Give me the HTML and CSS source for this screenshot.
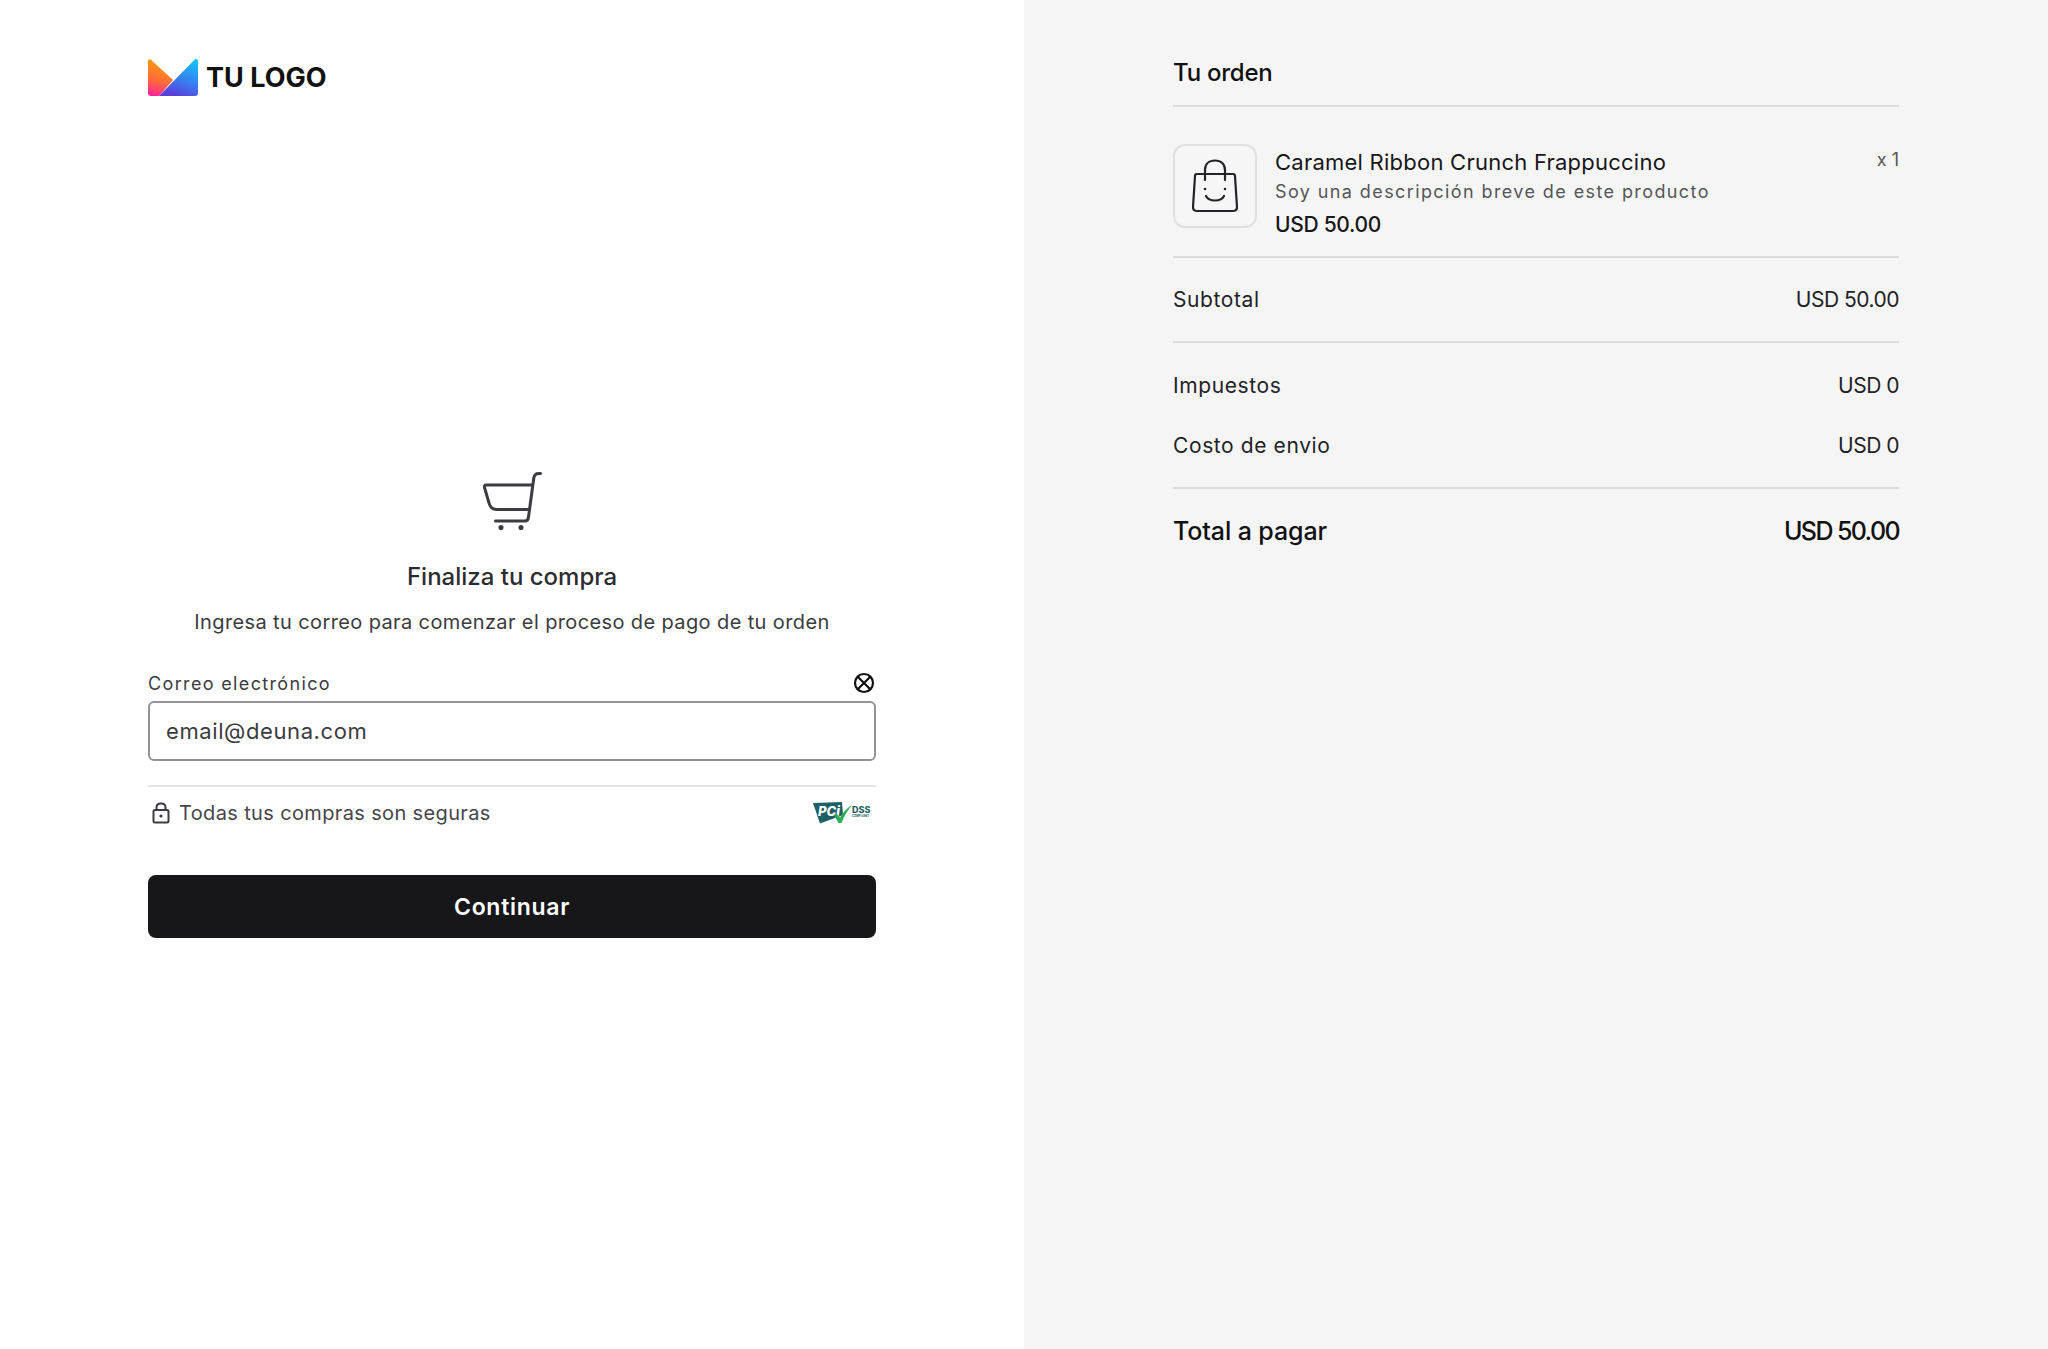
FILE: index.html
```html
<!DOCTYPE html>
<html lang="es">
<head>
<meta charset="utf-8">
<title>Checkout</title>
<link rel="stylesheet" href="styles.css">
</head>
<body>
<main class="page">
  <section class="left">
    <header class="brand">
      <svg class="brand-mark" viewBox="0 0 50 38" width="50" height="38">
        <defs>
          <linearGradient id="gl" x1="0.3" y1="0" x2="0.1" y2="1">
            <stop offset="0" stop-color="#ff9d0a"/><stop offset="0.55" stop-color="#ff6a3a"/><stop offset="1" stop-color="#ff1f9c"/>
          </linearGradient>
          <linearGradient id="gr" x1="0.85" y1="0" x2="0.45" y2="1">
            <stop offset="0" stop-color="#12c4fb"/><stop offset="0.6" stop-color="#3a7bf0"/><stop offset="1" stop-color="#5a3fd8"/>
          </linearGradient>
        </defs>
        <path d="M0 3.500C0 1.500 1.800 .8 3 1.800L25 22 11 38H3C1 38 0 37 0 35Z" fill="url(#gl)"/>
        <path d="M47 1.200C48.800 .4 50 1.500 50 3.500V35C50 37 49 38 47 38H11Z" fill="url(#gr)"/>
      </svg>
      <span class="brand-name">TU LOGO</span>
    </header>
    <div class="form">
      <svg class="cart" viewBox="0 0 60 60" width="60" height="60" fill="none" stroke="#3b3b40" stroke-width="3" stroke-linecap="round" stroke-linejoin="round">
        <path d="M58.500 2.500H57C54 2.500 52.300 4 51.800 7L46.500 46C46.200 48.500 45 50 43 50H13.500"/>
        <path d="M50 14H4C2.800 14 2.200 15 2.500 16.500L7 32C8 36 11 38.500 15 38.500H47.500"/>
        <circle cx="19" cy="56.500" r="1.800" fill="#3b3b40" stroke-width="1.500"/>
        <circle cx="39" cy="56.500" r="1.800" fill="#3b3b40" stroke-width="1.500"/>
      </svg>
      <h1 class="form-title">Finaliza tu compra</h1>
      <p class="form-desc">Ingresa tu correo para comenzar el proceso de pago de tu orden</p>
      <div class="label-row">
        <label class="field-label" for="email">Correo electrónico</label>
        <svg class="clear" viewBox="0 0 22 22" width="22" height="22" fill="none" stroke="#111" stroke-width="2.200">
          <circle cx="11" cy="11" r="9"/><path d="M5 5L17 17M17 5L5 17"/>
        </svg>
      </div>
      <input class="field" id="email" type="text" placeholder="email@deuna.com">
      <div class="secure">
        <span class="secure-text">
          <svg class="lock" viewBox="0 0 18 22" width="18" height="22" fill="none" stroke="#3b3b40" stroke-width="2">
            <rect x="1.500" y="8" width="15" height="12.500" rx="1.500"/>
            <path d="M4.500 8V5.500C4.500 3 6.500 1.500 9 1.500S13.500 3 13.500 5.500V8"/>
            <circle cx="9" cy="14" r="1.600" fill="#3b3b40" stroke="none"/>
          </svg>
          Todas tus compras son seguras
        </span>
        <span class="pci">
          <svg viewBox="0 0 60 22" width="60" height="22">
            <path d="M0 1L29 0 30 13 7 21.500Z" fill="#1f5f66"/>
            <text class="pci-text" x="5" y="14">PCi</text>
            <path d="M21 13L24 12 27 15.500C30 10.500 34 6 39 3 35 8 31 14 28.500 21H25.500Z" fill="#2fae5a"/>
            <text class="dss-text" x="39" y="11">DSS</text>
            <text class="dss-sub" x="39" y="14.500">COMPLIANT</text>
          </svg>
        </span>
      </div>
      <button class="submit" type="button">Continuar</button>
    </div>
  </section>
  <aside class="right">
    <h2 class="order-title">Tu orden</h2>
    <div class="product">
      <div class="thumb">
        <svg viewBox="0 0 46 54" width="46" height="54" fill="none" stroke="#222227" stroke-width="2.200" stroke-linecap="round" stroke-linejoin="round">
          <path d="M5 15H41C42 15 43 16 43 17L45 48C45 51 43 52 41 52H5C3 52 1 51 1 48L3 17C3 16 4 15 5 15Z"/>
          <path d="M13 21V11C13 5 17 1.500 23 1.500S33 5 33 11V21"/>
          <circle cx="13" cy="30" r="1.300" fill="#222227" stroke="none"/>
          <circle cx="33" cy="30" r="1.300" fill="#222227" stroke="none"/>
          <path d="M14 37C17 43 29 43 32 37"/>
        </svg>
      </div>
      <div class="product-info">
        <div class="product-name">Caramel Ribbon Crunch Frappuccino</div>
        <div class="product-desc">Soy una descripción breve de este producto</div>
        <div class="product-price">USD 50.00</div>
      </div>
      <div class="qty">x 1</div>
    </div>
    <div class="row row-sub"><span class="label">Subtotal</span><span class="value">USD 50.00</span></div>
    <div class="group">
      <div class="row"><span class="label">Impuestos</span><span class="value">USD 0</span></div>
      <div class="row"><span class="label">Costo de envio</span><span class="value">USD 0</span></div>
    </div>
    <div class="row row-total"><span class="label">Total a pagar</span><span class="value">USD 50.00</span></div>
  </aside>
</main>
</body>
</html>
```

FILE: styles.css
```css
* { box-sizing: border-box; }
html, body { margin: 0; height: 100%; }
body { font-family: Inter, "Liberation Sans", sans-serif; color: #17171a; background: #fff; }
.page { display: flex; height: 1349px; }
.left { width: 1024px; padding: 58px 148px 0; display: flex; flex-direction: column; background: #fff; }
.brand { display: flex; align-items: center; gap: 8px; height: 38px; }
.brand-mark { display: block; }
.brand-name { font-size: 27px; font-weight: 700; color: #111; letter-spacing: 0; }
.form { margin-top: 375px; display: flex; flex-direction: column; align-items: center; width: 728px; }
.cart { display: block; }
.form-title { margin: 30px 0 0; font-size: 24px; line-height: 32px; font-weight: 500; color: #2c2c30; letter-spacing: 0; }
.form-desc { margin: 13px 0 0; font-size: 20px; line-height: 32px; font-weight: 400; color: #3b3b40; letter-spacing: 0.38px; }
.label-row { align-self: stretch; margin-top: 33px; height: 24px; display: flex; justify-content: space-between; align-items: center; padding-right: 1px; }
.field-label { font-size: 18px; letter-spacing: 1.35px; color: #3b3b40; }
.clear { display: block; }
.field { align-self: stretch; margin-top: 6px; height: 60px; padding: 0 16px; border: 2px solid #939397; border-radius: 6px; font: 400 22px Inter, "Liberation Sans", sans-serif; letter-spacing: 0.6px; color: #3b3b40; outline: none; background: #fff; }
.field::placeholder { color: #3b3b40; opacity: 1; }
.secure { align-self: stretch; margin-top: 24px; border-top: 2px solid #e4e4e6; padding-top: 2px; display: flex; justify-content: space-between; align-items: center; height: 52px; }
.secure-text { display: flex; align-items: center; gap: 9px; padding-left: 4px; font-size: 20px; letter-spacing: 0.36px; color: #46464b; }
.lock { display: block; }
.pci { display: block; padding-right: 3px; }
.pci svg { display: block; }
.pci-text { font: italic 800 13px Inter, sans-serif; fill: #fff; }
.dss-text { font: 800 9px Inter, sans-serif; fill: #1f5f66; }
.dss-sub { font: 700 2.800px Inter, sans-serif; fill: #1f5f66; }
.submit { align-self: stretch; margin-top: 38px; height: 63px; border: 0; border-radius: 8px; background: #17171a; color: #fff; font: 600 23px Inter, "Liberation Sans", sans-serif; letter-spacing: 0.7px; }
.right { flex: 1; background: #f5f5f5; padding: 55px 149px 0; }
.order-title { margin: 0; height: 52px; border-bottom: 2px solid #dcdcde; font-size: 24px; line-height: 36px; font-weight: 500; color: #111; letter-spacing: -0.25px; }
.product { display: flex; align-items: flex-start; padding: 37px 0 0; height: 151px; border-bottom: 2px solid #dcdcde; }
.thumb { width: 84px; height: 84px; flex: none; border: 2px solid #e0e0e2; border-radius: 12px; display: flex; align-items: center; justify-content: center; background: #f6f6f6; }
.product-info { margin-left: 18px; flex: 1; }
.product-name { font-size: 22px; line-height: 30px; margin-top: 3px; letter-spacing: 0.24px; color: #17171a; }
.product-desc { font-size: 18px; line-height: 30px; letter-spacing: 1.4px; margin-top: 0; color: #55555a; }
.product-price { font-size: 21px; line-height: 30px; margin-top: 3px; font-weight: 500; letter-spacing: -0.3px; color: #17171a; }
.qty { font-size: 18px; line-height: 24px; margin-top: 4px; color: #55555a; letter-spacing: 0; }
.row { display: flex; justify-content: space-between; align-items: center; font-size: 21px; color: #222227; height: 60px; }
.label { letter-spacing: 0.6px; }
.value { letter-spacing: -0.5px; }
.row-sub { height: 85px; border-bottom: 2px solid #dcdcde; }
.group { padding: 12px 0 12px; border-bottom: 2px solid #dcdcde; }
.row-total { height: 84px; font-size: 25px; font-weight: 500; color: #111; }
.row-total .label { letter-spacing: -0.1px; }
.row-total .value { letter-spacing: -1.6px; }
```
